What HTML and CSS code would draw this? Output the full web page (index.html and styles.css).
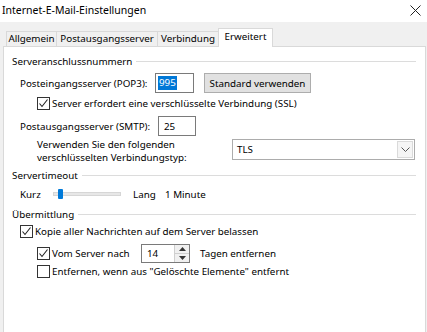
FILE: index.html
```html
<!DOCTYPE html>
<html lang="de">
<head>
    <meta charset="UTF-8">
    <title>Internet-E-Mail-Einstellungen</title>
    <link rel="stylesheet" href="styles.css">
</head>
<body>
    <!-- Title bar -->
    <div class="titlebar">
        <span class="title">Internet-E-Mail-Einstellungen</span>
        <svg class="close" width="11" height="11" viewBox="0 0 11 11">
            <path d="M0.5 0.5 L10.5 10.5 M10.5 0.5 L0.5 10.5" stroke="#222" stroke-width="1" fill="none"/>
        </svg>
    </div>

    <!-- Tabs -->
    <div class="tabs">
        <div class="tab tab-general">Allgemein</div>
        <div class="tab tab-outgoing">Postausgangsserver</div>
        <div class="tab tab-connection">Verbindung</div>
        <div class="tab tab-advanced active">Erweitert</div>
    </div>

    <div class="panel">
        <!-- Server ports -->
        <div class="group"><span>Serveranschlussnummern</span><i class="rule"></i></div>

        <div class="row row-pop">
            <span class="lbl lbl-pop">Posteingangsserver (POP3):</span>
            <span class="field field-pop"><span class="selected-text">995</span></span>
            <span class="btn">Standard verwenden</span>
        </div>

        <div class="check-row row-ssl">
            <span class="cb"><svg width="11" height="11" viewBox="0 0 11 11"><path d="M1.5 5.5 L4 8.5 L9.5 1.5" stroke="#222" stroke-width="1.1" fill="none"/></svg></span>
            <span>Server erfordert eine verschlüsselte Verbindung (SSL)</span>
        </div>

        <div class="row row-smtp">
            <span class="lbl lbl-smtp">Postausgangsserver (SMTP):</span>
            <span class="field field-smtp">25</span>
        </div>

        <div class="row row-enc">
            <span class="lbl lbl-enc">Verwenden Sie den folgenden<br>verschlüsselten Verbindungstyp:</span>
            <span class="dropdown">
                <span class="dropdown-value">TLS</span>
                <span class="dropdown-arrow"><svg width="9" height="5" viewBox="0 0 9 5"><path d="M0.5 0.5 L4.5 4.5 L8.5 0.5" stroke="#555" stroke-width="1" fill="none"/></svg></span>
            </span>
        </div>

        <!-- Server timeout -->
        <div class="group group-timeout"><span>Servertimeout</span><i class="rule"></i></div>

        <div class="row row-timeout">
            <span class="lbl-kurz">Kurz</span>
            <span class="slider"><span class="thumb"></span></span>
            <span class="lbl-lang">Lang</span>
            <span>1 Minute</span>
        </div>

        <!-- Delivery -->
        <div class="group group-delivery"><span>Übermittlung</span><i class="rule"></i></div>

        <div class="check-row row-copy">
            <span class="cb"><svg width="11" height="11" viewBox="0 0 11 11"><path d="M1.5 5.5 L4 8.5 L9.5 1.5" stroke="#222" stroke-width="1.1" fill="none"/></svg></span>
            <span>Kopie aller Nachrichten auf dem Server belassen</span>
        </div>

        <div class="check-row row-days">
            <span class="cb"><svg width="11" height="11" viewBox="0 0 11 11"><path d="M1.5 5.5 L4 8.5 L9.5 1.5" stroke="#222" stroke-width="1.1" fill="none"/></svg></span>
            <span class="lbl-days">Vom Server nach</span>
            <span class="spinner">
                <span class="spinner-value">14</span>
                <span class="spinner-buttons">
                    <span class="spin-btn"><svg width="7" height="4" viewBox="0 0 7 4"><path d="M0 4 L3.5 0 L7 4 Z" fill="#333"/></svg></span>
                    <span class="spin-btn"><svg width="7" height="4" viewBox="0 0 7 4"><path d="M0 0 L3.5 4 L7 0 Z" fill="#333"/></svg></span>
                </span>
            </span>
            <span class="lbl-after">Tagen entfernen</span>
        </div>

        <div class="check-row row-deleted">
            <span class="cb"></span>
            <span>Entfernen, wenn aus "Gelöschte Elemente" entfernt</span>
        </div>
    </div>
</body>
</html>
```

FILE: styles.css
```css
/* dialog styling */
* {
    box-sizing: border-box;
}
body {
    margin: 0;
    background: #f0f0f0;
    font-family: "Noto Sans", sans-serif;
    font-size: 9.8px;
    color: #000;
    overflow: hidden;
}

/* title bar */
.titlebar {
    height: 22px;
    background: #fff;
    display: flex;
    align-items: center;
    justify-content: space-between;
    padding: 0 6px 0 2px;
}
.title {
    font-size: 10.5px;
    margin-top: -2px;
}
.close {
    margin-top: -2px;
}

/* tabs */
.tabs {
    display: flex;
    align-items: flex-end;
    height: 24px;
    padding-left: 6px;
}
.tab {
    height: 15px;
    line-height: 14px;
    border: 1px solid #d9d9d9;
    border-bottom: none;
    margin-right: -1px;
    background: #f0f0f0;
    text-align: center;
}
.tab-general {
    width: 51px;
}
.tab-outgoing {
    width: 102px;
}
.tab-connection {
    width: 62px;
}
.tab.active {
    width: 55px;
    height: 19px;
    line-height: 15px;
    margin-bottom: -1px;
    background: #fff;
    position: relative;
    z-index: 1;
}

/* panel */
.panel {
    margin: 0 1px 0 3px;
    height: 300px;
    background: #fff;
    border: 1px solid #d9d9d9;
    padding: 7px 9px 0 8px;
}
.group {
    display: flex;
    align-items: center;
    height: 14px;
    gap: 4px;
}
.rule {
    flex: 1;
    border-top: 1px solid #dcdcdc;
}
.group-timeout {
    margin-top: 4px;
}
.group-delivery {
    margin-top: 6px;
}

.row {
    display: flex;
    align-items: center;
    padding-left: 8px;
}
.row-pop {
    margin-top: 5px;
    height: 20px;
}
.lbl-pop {
    width: 135px;
}
.field {
    height: 20px;
    border: 1px solid #7a7a7a;
    background: #fff;
    display: flex;
    align-items: center;
    padding-left: 2px;
}
.field-pop {
    width: 39px;
}
.selected-text {
    background: #0078d7;
    color: #fff;
    padding: 0 1px;
    line-height: 14px;
}
.btn {
    margin-left: 10px;
    width: 107px;
    height: 20px;
    border: 1px solid #adadad;
    background: #e1e1e1;
    display: flex;
    align-items: center;
    justify-content: center;
}

.check-row {
    display: flex;
    align-items: center;
    gap: 2px;
}
.cb {
    width: 13px;
    height: 13px;
    border: 1px solid #333;
    background: #fff;
    display: flex;
    align-items: center;
    justify-content: center;
    flex-shrink: 0;
}
.row-ssl {
    margin-top: 3px;
    height: 14px;
    padding-left: 25px;
}

.row-smtp {
    margin-top: 6px;
    height: 20px;
}
.lbl-smtp {
    width: 138px;
}
.field-smtp {
    width: 38px;
    padding-left: 5px;
}

.row-enc {
    margin-top: 2px;
    height: 26px;
    padding-left: 25px;
}
.lbl-enc {
    width: 195px;
    line-height: 13px;
}
.dropdown {
    width: 183px;
    height: 21px;
    border: 1px solid #acacac;
    background: #fff;
    display: flex;
    align-items: center;
    justify-content: space-between;
    padding: 1px;
    margin-top: -4px;
}
.dropdown-value {
    padding-left: 3px;
}
.dropdown-arrow {
    width: 16px;
    height: 17px;
    border: 1px solid #dadada;
    background: #f5f5f5;
    display: flex;
    align-items: center;
    justify-content: center;
}

.row-timeout {
    margin-top: 5px;
    height: 14px;
}
.lbl-kurz {
    width: 33px;
}
.slider {
    position: relative;
    width: 68px;
    height: 4px;
    background: #e7e7e7;
    border: 1px solid #d6d6d6;
}
.thumb {
    position: absolute;
    left: 4px;
    top: -4px;
    width: 5px;
    height: 10px;
    background: #007ad9;
    border-radius: 1px;
}
.lbl-lang {
    margin-left: 12px;
    width: 32px;
}

.row-copy {
    margin-top: 4px;
    height: 13px;
    padding-left: 8px;
}
.row-days {
    margin-top: 6px;
    height: 19px;
    padding-left: 25px;
}
.lbl-days {
    width: 87px;
}
.spinner {
    width: 49px;
    height: 19px;
    border: 1px solid #7a7a7a;
    display: flex;
    justify-content: space-between;
}
.spinner-value {
    padding-left: 5px;
    line-height: 18px;
}
.spinner-buttons {
    width: 15px;
    display: flex;
    flex-direction: column;
    border-left: 1px solid #cfcfcf;
}
.spin-btn {
    flex: 1;
    display: flex;
    align-items: center;
    justify-content: center;
    background: #f0f0f0;
    border-bottom: 1px solid #cfcfcf;
}
.spin-btn:last-child {
    border-bottom: none;
}
.lbl-after {
    margin-left: 8px;
}
.row-deleted {
    margin-top: 2px;
    height: 13px;
    padding-left: 25px;
}
```
